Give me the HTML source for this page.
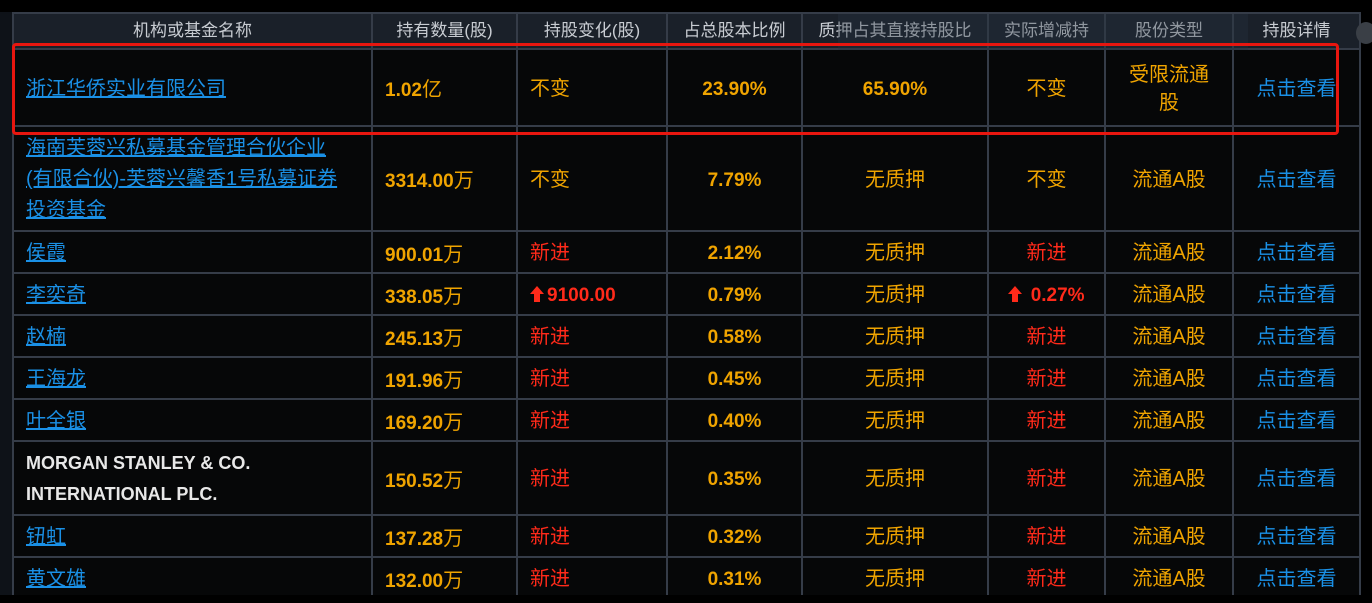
<!DOCTYPE html>
<html><head><meta charset="utf-8"><style>
body{margin:0;width:1372px;height:603px;background:#000;overflow:hidden;position:relative;font-family:"Liberation Sans","Noto Sans CJK SC",sans-serif}
.lstrip{position:absolute;left:0;top:12px;width:12px;height:583px;background:#0e1218}
table{position:absolute;left:12px;top:12px;border-collapse:collapse;table-layout:fixed;width:1347px;background:#060708}
td,th{border:2px solid #353c48;padding:0;font-size:20px;line-height:24px;color:#f0a400;text-align:center;vertical-align:middle;overflow:hidden;white-space:nowrap}
td{padding-top:2px}
th{background:#1a2029;color:#c8ccd2;font-weight:normal;font-size:17px;height:34px}
td.l{text-align:left;padding-left:12px}
.b{color:#1a90e6;text-decoration:underline}
.k{color:#1a90e6}
.r{color:#ff2a1a}
td.n{font-family:"Liberation Sans",sans-serif;font-size:19px;font-weight:bold;padding-top:4px}
.n span.c{font-family:"Noto Sans CJK SC",sans-serif;font-size:20px;font-weight:normal}
.red{position:absolute;left:12px;top:43px;width:1321px;height:86px;border:3px solid #e8160f;border-radius:4px}
.ov{position:absolute;left:838px;top:14px;width:410px;height:36px;background:rgba(40,52,66,.35)}
.dot{position:absolute;left:1356px;top:22px;width:20px;height:22px;border-radius:50%;background:#3a3f46}
.ar{display:inline-block;vertical-align:middle;margin-right:3px;position:relative;top:-2px}
</style></head><body>
<div class="lstrip"></div>
<table>
<colgroup><col style="width:359px"><col style="width:145px"><col style="width:150px"><col style="width:135px"><col style="width:186px"><col style="width:117px"><col style="width:128px"><col style="width:127px"></colgroup>
<tr><th>机构或基金名称</th><th>持有数量(股)</th><th>持股变化(股)</th><th>占总股本比例</th><th>质押占其直接持股比</th><th>实际增减持</th><th>股份类型</th><th>持股详情</th></tr>
<tr style="height:77px"><td class="l"><span class="b">浙江华侨实业有限公司</span></td><td class="l n">1.02<span class="c">亿</span></td><td class="l">不变</td><td class="n">23.90%</td><td class="n">65.90%</td><td>不变</td><td style="white-space:normal;line-height:28px">受限流通<br>股</td><td class="k">点击查看</td></tr>
<tr style="height:105px"><td class="l" style="line-height:31px"><span class="b">海南芙蓉兴私募基金管理合伙企业<br>(有限合伙)-芙蓉兴馨香1号私募证券<br>投资基金</span></td><td class="l n">3314.00<span class="c">万</span></td><td class="l">不变</td><td class="n">7.79%</td><td>无质押</td><td>不变</td><td>流通A股</td><td class="k">点击查看</td></tr>
<tr style="height:42px"><td class="l"><span class="b">侯霞</span></td><td class="l n">900.01<span class="c">万</span></td><td class="l r">新进</td><td class="n">2.12%</td><td>无质押</td><td class="r">新进</td><td>流通A股</td><td class="k">点击查看</td></tr>
<tr style="height:42px"><td class="l"><span class="b">李奕奇</span></td><td class="l n">338.05<span class="c">万</span></td><td class="l n r"><svg class="ar" width="14" height="16" viewBox="0 0 14 16"><path d="M7 0L14 8H10V16H4V8H0Z" fill="#ff2a1a"/></svg>9100.00</td><td class="n">0.79%</td><td>无质押</td><td class="r n"><svg class="ar" width="14" height="16" viewBox="0 0 14 16"><path d="M7 0L14 8H10V16H4V8H0Z" fill="#ff2a1a"/></svg> 0.27%</td><td>流通A股</td><td class="k">点击查看</td></tr>
<tr style="height:42px"><td class="l"><span class="b">赵楠</span></td><td class="l n">245.13<span class="c">万</span></td><td class="l r">新进</td><td class="n">0.58%</td><td>无质押</td><td class="r">新进</td><td>流通A股</td><td class="k">点击查看</td></tr>
<tr style="height:42px"><td class="l"><span class="b">王海龙</span></td><td class="l n">191.96<span class="c">万</span></td><td class="l r">新进</td><td class="n">0.45%</td><td>无质押</td><td class="r">新进</td><td>流通A股</td><td class="k">点击查看</td></tr>
<tr style="height:42px"><td class="l"><span class="b">叶全银</span></td><td class="l n">169.20<span class="c">万</span></td><td class="l r">新进</td><td class="n">0.40%</td><td>无质押</td><td class="r">新进</td><td>流通A股</td><td class="k">点击查看</td></tr>
<tr style="height:74px"><td class="l" style="color:#e8e8e8;font-size:18px;line-height:31px;font-weight:bold">MORGAN STANLEY &amp; CO.<br>INTERNATIONAL PLC.</td><td class="l n">150.52<span class="c">万</span></td><td class="l r">新进</td><td class="n">0.35%</td><td>无质押</td><td class="r">新进</td><td>流通A股</td><td class="k">点击查看</td></tr>
<tr style="height:42px"><td class="l"><span class="b">钮虹</span></td><td class="l n">137.28<span class="c">万</span></td><td class="l r">新进</td><td class="n">0.32%</td><td>无质押</td><td class="r">新进</td><td>流通A股</td><td class="k">点击查看</td></tr>
<tr style="height:42px"><td class="l"><span class="b">黄文雄</span></td><td class="l n">132.00<span class="c">万</span></td><td class="l r">新进</td><td class="n">0.31%</td><td>无质押</td><td class="r">新进</td><td>流通A股</td><td class="k">点击查看</td></tr>
</table>
<div style="position:absolute;left:0;top:595px;width:1372px;height:8px;background:#000"></div>
<div class="ov"></div>
<div class="dot"></div>
<div class="red"></div>
</body></html>
